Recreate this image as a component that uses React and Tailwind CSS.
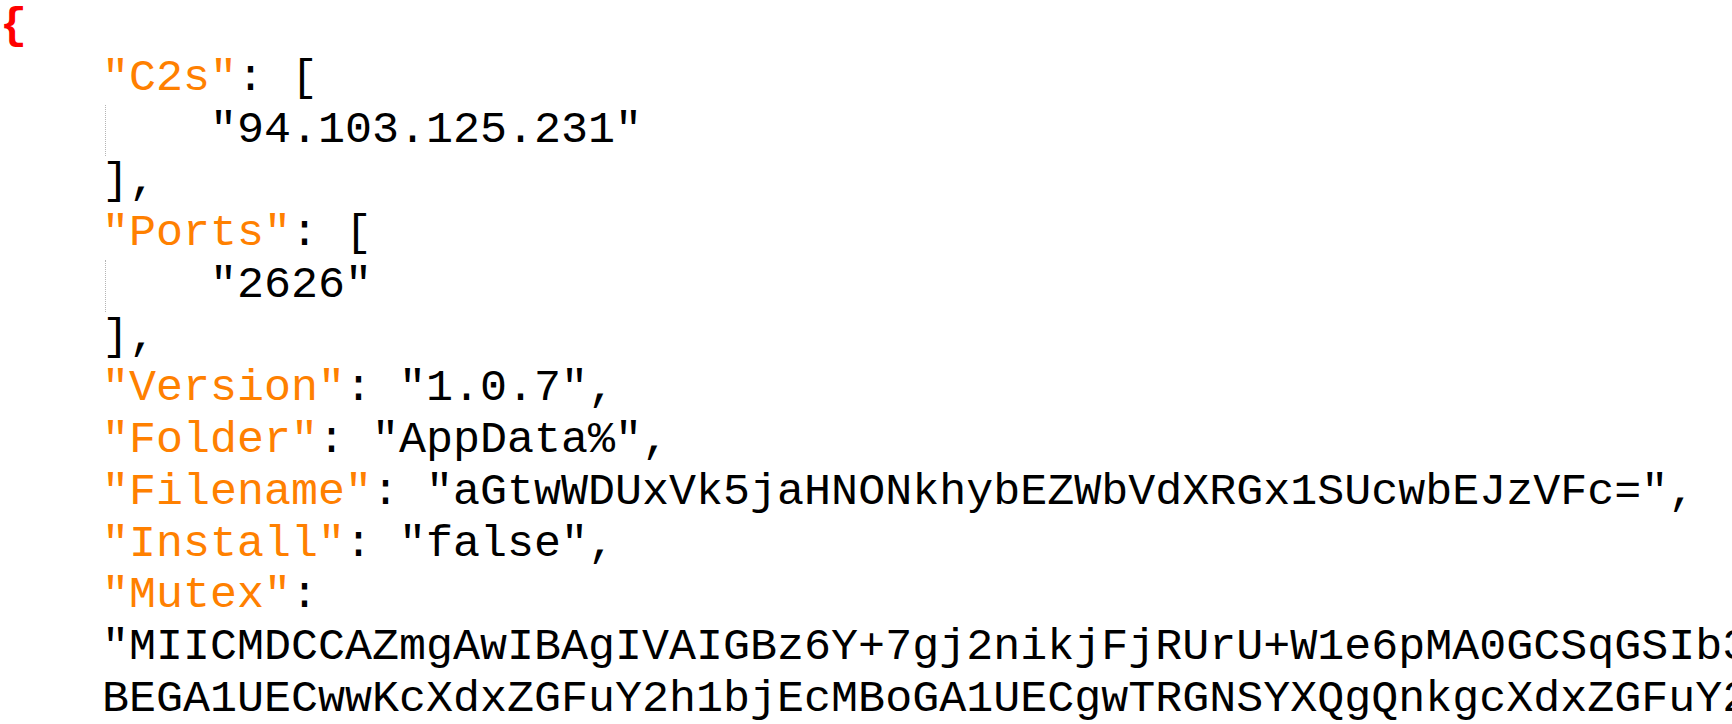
export default function App() {
  const key = "text-[#ff8000]";
  const line = "whitespace-nowrap pl-[102px]";
  return (
    <div
      className="w-[1732px] h-[724px] overflow-hidden bg-white text-black text-[45px] leading-[51.75px] pt-[1px]"
      style={{ fontFamily: '"Liberation Mono", "Courier New", monospace' }}
    >
      <div className="whitespace-nowrap">
        <span className="text-[#ff0000] font-bold">{"{"}</span>
      </div>
      <div className={line}>
        <span className={key}>"C2s"</span>: [
      </div>
      <div className="ml-[105px] border-l border-dotted border-[#b4b4b4] pl-[104px] whitespace-nowrap">
        "94.103.125.231"
      </div>
      <div className={line}>],</div>
      <div className={line}>
        <span className={key}>"Ports"</span>: [
      </div>
      <div className="ml-[105px] border-l border-dotted border-[#b4b4b4] pl-[104px] whitespace-nowrap">
        "2626"
      </div>
      <div className={line}>],</div>
      <div className={line}>
        <span className={key}>"Version"</span>: "1.0.7",
      </div>
      <div className={line}>
        <span className={key}>"Folder"</span>: "AppData%",
      </div>
      <div className={line}>
        <span className={key}>"Filename"</span>: "aGtwWDUxVk5jaHNONkhybEZWbVdXRGx1SUcwbEJzVFc=",
      </div>
      <div className={line}>
        <span className={key}>"Install"</span>: "false",
      </div>
      <div className={line}>
        <span className={key}>"Mutex"</span>:
      </div>
      <div className={line}>
        "MIICMDCCAZmgAwIBAgIVAIGBz6Y+7gj2nikjFjRUrU+W1e6pMA0GCSqGSIb3DQEBDQUAMGQxFTATBgNVBAMMDERjUmF0IFNlcnZlcjETM
      </div>
      <div className={line}>
        BEGA1UECwwKcXdxZGFuY2h1bjEcMBoGA1UECgwTRGNSYXQgQnkgcXdxZGFuY2h1bjELMAkGA1UEBwwCU0gxCzAJBgNVBAYTAkNO
      </div>
    </div>
  );
}
